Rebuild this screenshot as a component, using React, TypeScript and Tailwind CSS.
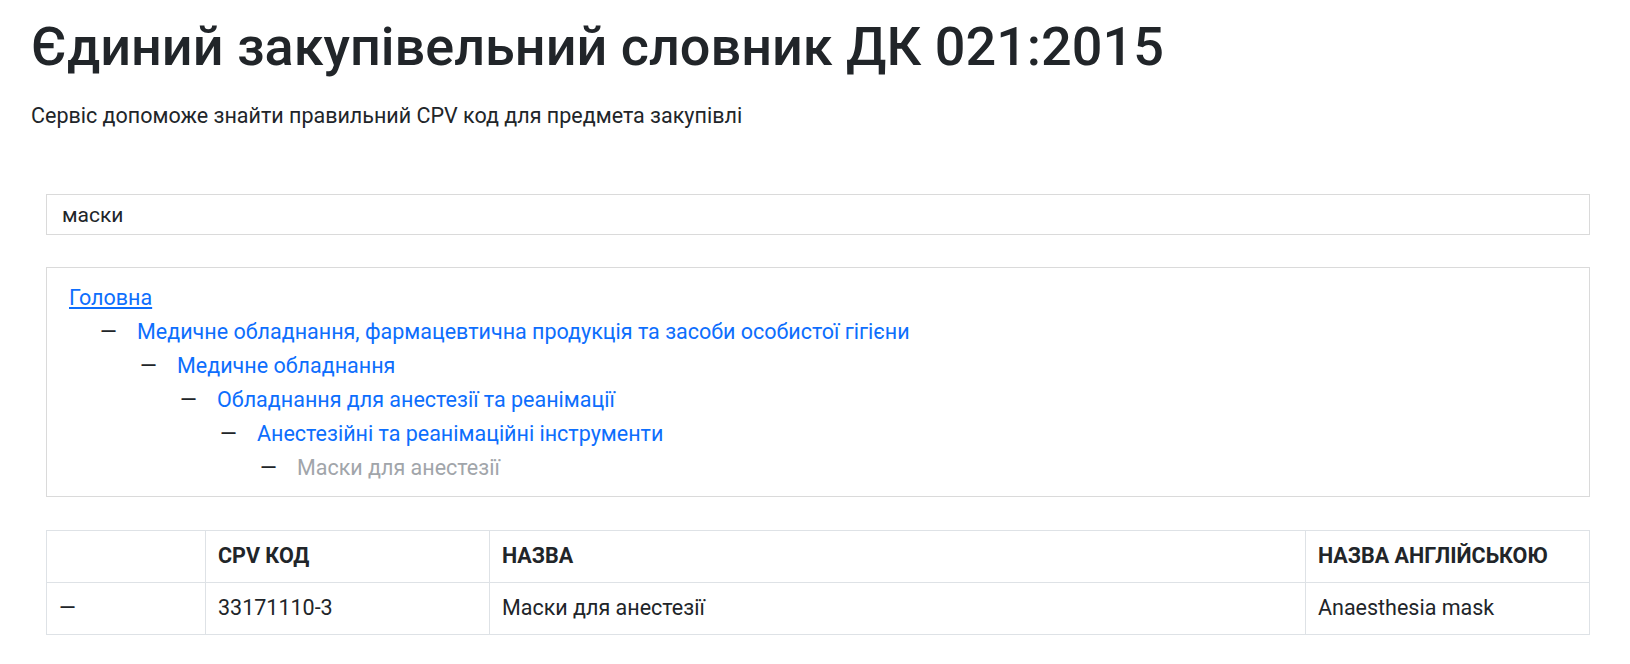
const crumbs = [
  "Медичне обладнання, фармацевтична продукція та засоби особистої гігієни",
  "Медичне обладнання",
  "Обладнання для анестезії та реанімації",
  "Анестезійні та реанімаційні інструменти",
];

const indents = ["ml-[31px]", "ml-[71px]", "ml-[111px]", "ml-[151px]", "ml-[191px]"];

export default function App() {
  return (
    <div
      className="min-h-screen bg-white text-[#212529] px-[31px] pt-[15px]"
      style={{ fontFamily: "Roboto, 'Liberation Sans', sans-serif" }}
    >
      {/* HEADER */}
      <h1 className="text-[54px] font-medium leading-[1.2] tracking-normal">
        Єдиний закупівельний словник ДК 021:2015
      </h1>
      <p className="mt-[20px] text-[21.5px] leading-[1.5]">
        Сервіс допоможе знайти правильний CPV код для предмета закупівлі
      </p>

      <div className="pl-[15px] pr-[9px] mt-[62px]">
        {/* SEARCH */}
        <input
          type="text"
          defaultValue="маски"
          className="w-full h-[41px] border border-[#dadada] px-[15px] text-[21px] text-[#212529] outline-none"
        />

        {/* BREADCRUMB TREE */}
        <div className="mt-[32px] border border-[#dadada] px-[22px] pt-[13px] pb-[11px] text-[21.5px] leading-[34px]">
          <a href="#" className="text-[#0d6efd] underline">
            Головна
          </a>
          {crumbs.map((c, i) => (
            <div key={c} className={`${indents[i]} flex gap-[21px]`}>
              <span className="w-[16px] text-[#212529]">—</span>
              <a href="#" className="text-[#0d6efd]">
                {c}
              </a>
            </div>
          ))}
          <div className={`${indents[4]} flex gap-[21px]`}>
            <span className="w-[16px] text-[#212529]">—</span>
            <span className="text-[#a1a5aa]">Маски для анестезії</span>
          </div>
        </div>

        {/* RESULTS TABLE */}
        <table className="mt-[33px] w-full border-collapse border border-[#dee2e6] text-[21.5px]">
          <thead>
            <tr className="h-[52px]">
              <th className="w-[159px] border border-[#dee2e6]"></th>
              <th className="w-[284px] border border-[#dee2e6] px-[12px] text-left font-bold">
                CPV КОД
              </th>
              <th className="border border-[#dee2e6] px-[12px] text-left font-bold">НАЗВА</th>
              <th className="w-[284px] border border-[#dee2e6] px-[12px] text-left font-bold">
                НАЗВА АНГЛІЙСЬКОЮ
              </th>
            </tr>
          </thead>
          <tbody>
            <tr className="h-[52px]">
              <td className="border border-[#dee2e6] px-[12px]">—</td>
              <td className="border border-[#dee2e6] px-[12px]">33171110-3</td>
              <td className="border border-[#dee2e6] px-[12px]">Маски для анестезії</td>
              <td className="border border-[#dee2e6] px-[12px]">Anaesthesia mask</td>
            </tr>
          </tbody>
        </table>
      </div>
    </div>
  );
}
